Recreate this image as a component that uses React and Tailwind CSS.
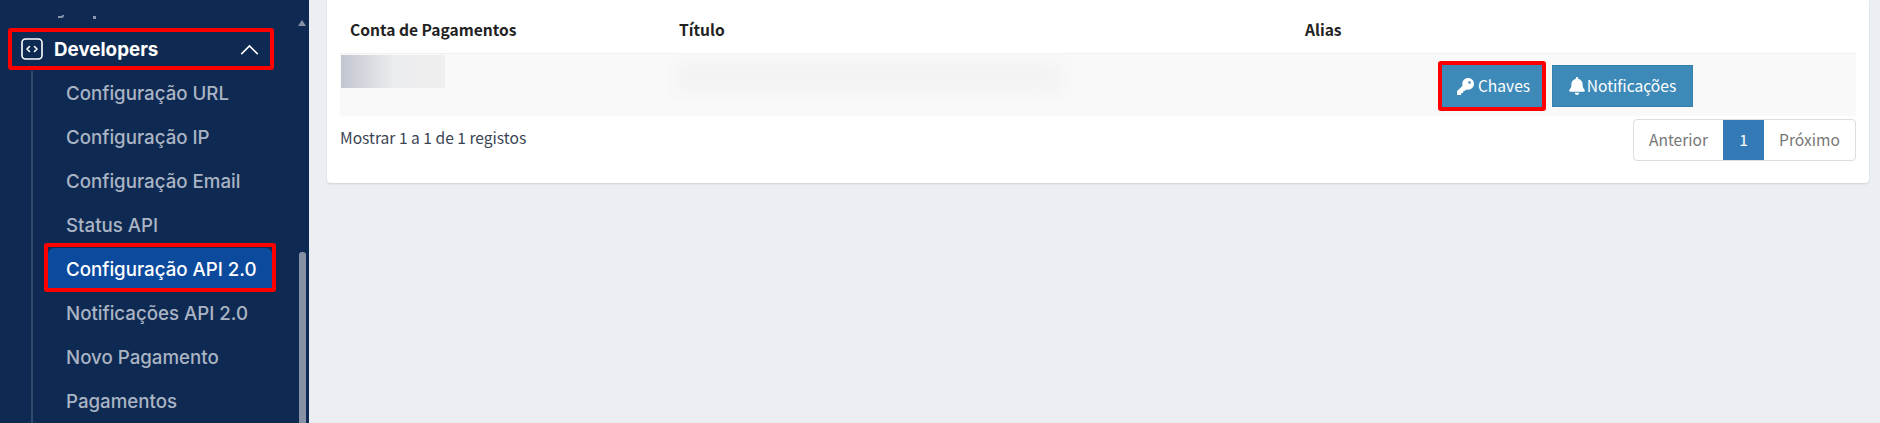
import React from "react";

const items = [
  "Configuração URL",
  "Configuração IP",
  "Configuração Email",
  "Status API",
  "Configuração API 2.0",
  "Notificações API 2.0",
  "Novo Pagamento",
  "Pagamentos",
];

function Key() {
  return (
    <svg viewBox="0 0 512 512" className="w-[17px] h-[17px]" fill="currentColor">
      <path d="M336 352c97.200 0 176-78.800 176-176S433.200 0 336 0 160 78.800 160 176c0 18.700 2.900 36.800 8.300 53.700L7 391c-4.500 4.500-7 10.600-7 17v80c0 13.300 10.700 24 24 24h80c13.300 0 24-10.700 24-24v-40h40c13.300 0 24-10.700 24-24v-40h40c6.400 0 12.500-2.500 17-7l33.300-33.300c16.900 5.400 35 8.300 53.700 8.300zm40-256a40 40 0 1 1 0 80 40 40 0 1 1 0-80z" />
    </svg>
  );
}

function Bell() {
  return (
    <svg viewBox="0 0 448 512" className="w-[16px] h-[18px]" fill="currentColor">
      <path d="M224 0c-17.700 0-32 14.300-32 32v19.200C119 66 64 130.600 64 208v18.800c0 47-17.300 92.400-48.500 127.600l-7.400 8.300c-8.400 9.400-10.400 22.900-5.300 34.400S19.400 416 32 416h384c12.600 0 24-7.400 29.200-18.900s3.100-25-5.300-34.400l-7.400-8.300C401.300 319.200 384 273.900 384 226.800V208c0-77.400-55-142-128-156.800V32c0-17.700-14.300-32-32-32zm45.300 493.300c12-12 18.700-28.300 18.700-45.300H160c0 17 6.700 33.300 18.700 45.300S207 512 224 512s33.300-6.700 45.300-18.700z" />
    </svg>
  );
}

export default function App() {
  return (
    <div className="flex w-[1880px] h-[423px] overflow-hidden bg-[#ebeef3] font-['Noto_Sans_CJK_SC','Noto_Sans',sans-serif]">
      <aside className="relative w-[309px] h-[423px] shrink-0 bg-[#0f2a52] overflow-hidden font-['Inter',sans-serif]">
        <div className="h-[28px] relative">
          <div className="absolute left-[58px] top-[15px] w-[6px] h-[3px] border-b-2 border-r-2 border-[#8a97ab] rounded-br-[3px]" />
          <div className="absolute left-[93px] top-[16px] w-[3px] h-[3px] bg-[#8a97ab]" />
        </div>
        <div className="relative ml-[8px] w-[266px] h-[42px] flex items-center pl-[13px] pr-[15px] text-white">
          <svg viewBox="0 0 22 22" className="w-[22px] h-[22px] shrink-0" fill="none" stroke="currentColor" strokeWidth="1.6" strokeLinecap="round" strokeLinejoin="round">
            <rect x="1" y="1" width="20" height="20" rx="3.500" />
            <path d="M8.500 8.500 6 11l2.500 2.500M13.500 8.500 16 11l-2.500 2.500" />
          </svg>
          <span className="ml-[11px] pt-[2px] text-[18.800px] font-bold">Developers</span>
          <svg viewBox="0 0 20 12" className="ml-auto w-[19px] h-[11px]" fill="none" stroke="currentColor" strokeWidth="1.700">
            <path d="M1 11 10 2l9 9" />
          </svg>
          <div className="absolute inset-0 border-4 border-[#ff0000] rounded-[3px]" />
        </div>
        <div className="ml-[31px] border-l-2 border-[#33496c] mt-[1px] pt-[1px]">
          <ul className="ml-[15px] w-[224px]">
            {items.map((t) => {
              const active = t === "Configuração API 2.0";
              return (
                <li
                  key={t}
                  className={
                    active
                      ? "relative h-[44px] bg-[#0c4a9e] rounded-t-[6px] flex items-center pl-[18px] text-[18.700px] font-medium text-white whitespace-nowrap"
                      : "h-[44px] flex items-center pl-[18px] text-[18.700px] font-medium text-[#aab4c4] whitespace-nowrap"
                  }
                >
                  {t}
                  {active && <div className="absolute inset-x-[-4px] top-[-5px] bottom-0 border-4 border-[#ff0000] rounded-[3px]" />}
                </li>
              );
            })}
          </ul>
        </div>
        <div className="absolute left-[299px] top-[252px] w-[7px] h-[171px] bg-[#8792a6] rounded-t-[3px]" />
        <div className="absolute left-[298px] top-[20px] w-0 h-0 border-l-[4.500px] border-r-[4.500px] border-b-[6px] border-l-transparent border-r-transparent border-b-[#8792a6]" />
      </aside>
      <main className="flex-1 pl-[18px] pr-[12px]">
        <section className="h-[183px] bg-white rounded-b-[4px] shadow-[0_1px_2px_rgba(0,0,0,0.12)] px-[13px] text-[#333]">
          <div className="w-[1516px]">
            <div className="flex h-[53px] items-center pt-[6px] text-[15.600px] font-bold text-[#222]">
              <div className="w-[339px] pl-[10px]">Conta de Pagamentos</div>
              <div className="w-[626px]">Título</div>
              <div>Alias</div>
            </div>
            <div className="relative h-[63px] pt-[2px] bg-[#f9f9f9] border-t border-[#f1f1f1] flex items-center">
              <div className="absolute left-[1px] top-[1px] w-[104px] h-[33px] bg-gradient-to-r from-[#c2c6cf] via-[#ebecee] to-[#efefef]" />
              <div className="absolute left-[326px] top-[1px] w-[408px] h-[46px] overflow-hidden">
                <div className="w-[392px] ml-[8px] h-[32px] mt-[7px] rounded-[20px] bg-[#f3f3f3] blur-[7px]" />
              </div>
              <div className="ml-auto mr-[163px] flex items-center gap-[10px] text-white text-[15.600px]">
                <div className="relative w-[100px] h-[42px] flex items-center justify-center gap-[4px] pl-[3px] bg-[#3d8ab9]">
                  <Key />
                  <span>Chaves</span>
                  <div className="absolute inset-[-4px] border-4 border-[#ff0000] rounded-[3px]" />
                </div>
                <div className="w-[141px] h-[42px] bg-[#3d8ab9] border border-[#357fab] flex items-center justify-center gap-[2px]">
                  <Bell />
                  <span>Notificações</span>
                </div>
              </div>
            </div>
            <div className="flex justify-between items-start">
              <div className="pt-[7px] text-[15.600px] leading-[28px] text-[#3a4453]">Mostrar 1 a 1 de 1 registos</div>
              <div className="mt-[3px] flex h-[42px] text-[15.600px] rounded-[4px] border border-[#ddd] text-[#777] overflow-hidden">
                <div className="w-[89px] flex items-center justify-center">Anterior</div>
                <div className="w-[41px] flex items-center justify-center bg-[#337ab7] text-white">1</div>
                <div className="w-[91px] flex items-center justify-center">Próximo</div>
              </div>
            </div>
          </div>
        </section>
      </main>
    </div>
  );
}
